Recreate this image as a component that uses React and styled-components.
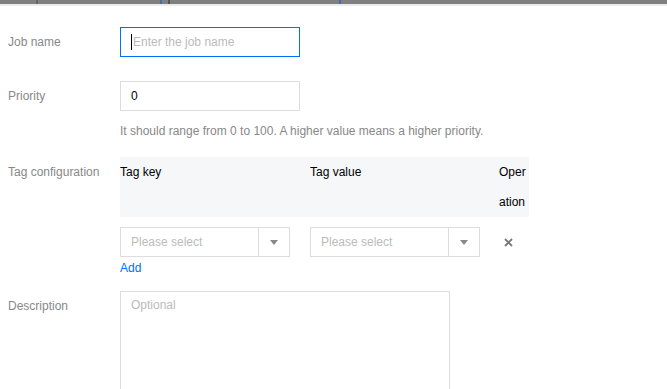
import styled, { createGlobalStyle } from "styled-components";

const GlobalStyle = createGlobalStyle`
  body {
    margin: 0;
    background: #fff;
    font-family: "Liberation Sans", Arial, sans-serif;
    font-size: 12px;
    color: #000;
  }
`;

function Caret() {
  return (
    <svg width="8" height="5" viewBox="0 0 8 5">
      <path d="M0 0 H8 L4 5 Z" fill="#888" />
    </svg>
  );
}

function Cross() {
  return (
    <svg width="9" height="9" viewBox="0 0 9 9">
      <path d="M1 1 L8 8 M8 1 L1 8" stroke="#777" strokeWidth="1.8" />
    </svg>
  );
}

function TagSelect() {
  return (
    <SSelect>
      <SSelectText>Please select</SSelectText>
      <SSelectArrow>
        <Caret />
      </SSelectArrow>
    </SSelect>
  );
}

function App() {
  return (
    <>
      <GlobalStyle />
      <STopBar>
        <STopSeg $w={36} />
        <STopMark $c="#666" />
        <STopSeg $w={122} />
        <STopMark $c="#4b6c9c" />
        <STopSeg $w={6} />
        <STopMark $c="#555" />
        <STopSeg $w={169} />
        <STopMark $c="#4b6c9c" />
        <STopSeg $grow />
      </STopBar>
      <SForm>
        <SRow>
          <SLabel>Job name</SLabel>
          <SField>
            <SInput $focus>
              <SCursor />
              <SPlaceholder>Enter the job name</SPlaceholder>
            </SInput>
          </SField>
        </SRow>

        <SRow $gap={24}>
          <SLabel>Priority</SLabel>
          <SField>
            <SInput>0</SInput>
            <SHelp>It should range from 0 to 100. A higher value means a higher priority.</SHelp>
          </SField>
        </SRow>

        <SRow $gap={16}>
          <SLabel>Tag configuration</SLabel>
          <SField>
            <STable>
              <SHead>
                <SHeadCell>Tag key</SHeadCell>
                <SHeadCell>Tag value</SHeadCell>
                <SHeadCell>Oper ation</SHeadCell>
              </SHead>
              <SBodyRow>
                <SCell>
                  <TagSelect />
                </SCell>
                <SCell>
                  <TagSelect />
                </SCell>
                <SOpCell>
                  <Cross />
                </SOpCell>
              </SBodyRow>
            </STable>
            <SAdd>Add</SAdd>
          </SField>
        </SRow>

        <SRow $gap={13}>
          <SLabel>Description</SLabel>
          <SField>
            <STextarea>
              <SPlaceholder>Optional</SPlaceholder>
            </STextarea>
          </SField>
        </SRow>
      </SForm>
    </>
  );
}

const STopBar = styled.div`
  display: flex;
  height: 4px;
  border-bottom: 2px solid #ececec;
`;

const STopSeg = styled.div`
  background: #808080;
  width: ${(p) => (p.$grow ? "auto" : `${p.$w}px`)};
  flex: ${(p) => (p.$grow ? 1 : "none")};
`;

const STopMark = styled.div`
  width: 2px;
  background: ${(p) => p.$c};
`;

const SForm = styled.div`
  display: flex;
  flex-direction: column;
  padding: 21px 0 0 8px;
`;

const SRow = styled.div`
  display: flex;
  margin-top: ${(p) => p.$gap || 0}px;
`;

const SLabel = styled.div`
  width: 112px;
  flex: none;
  color: #888;
  line-height: 30px;
`;

const SField = styled.div`
  display: flex;
  flex-direction: column;
`;

const SInput = styled.div`
  box-sizing: border-box;
  width: 180px;
  height: 30px;
  border: 1px solid ${(p) => (p.$focus ? "#006eff" : "#ddd")};
  padding: 0 10px;
  display: flex;
  align-items: center;
  color: #000;
`;

const SCursor = styled.span`
  width: 1px;
  height: 16px;
  background: #000;
  margin-right: 1px;
`;

const SPlaceholder = styled.span`
  color: #bbb;
`;

const SHelp = styled.div`
  color: #888;
  margin-top: 10px;
  line-height: 20px;
`;

const STable = styled.div`
  width: 409px;
  display: flex;
  flex-direction: column;
`;

const SHead = styled.div`
  display: grid;
  grid-template-columns: 190px 189px 30px;
  background: #f5f7f9;
  height: 60px;
`;

const SHeadCell = styled.div`
  line-height: 30px;
  color: #000;
  word-break: break-all;
  overflow: hidden;
`;

const SBodyRow = styled.div`
  display: grid;
  grid-template-columns: 190px 189px 30px;
  padding-top: 10px;
`;

const SCell = styled.div`
  display: flex;
`;

const SOpCell = styled.div`
  display: flex;
  align-items: center;
  padding-left: 5px;
  height: 30px;
`;

const SSelect = styled.div`
  box-sizing: border-box;
  width: 170px;
  height: 30px;
  border: 1px solid #ddd;
  display: flex;
`;

const SSelectText = styled.div`
  flex: 1;
  padding-left: 10px;
  line-height: 28px;
  color: #bbb;
`;

const SSelectArrow = styled.div`
  width: 30px;
  border-left: 1px solid #ddd;
  display: flex;
  align-items: center;
  justify-content: center;
`;

const SAdd = styled.div`
  color: #006eff;
  line-height: 20px;
  margin-top: 1px;
`;

const STextarea = styled.div`
  box-sizing: border-box;
  width: 330px;
  height: 120px;
  border: 1px solid #ddd;
  padding: 6px 10px;
`;

export default App;
